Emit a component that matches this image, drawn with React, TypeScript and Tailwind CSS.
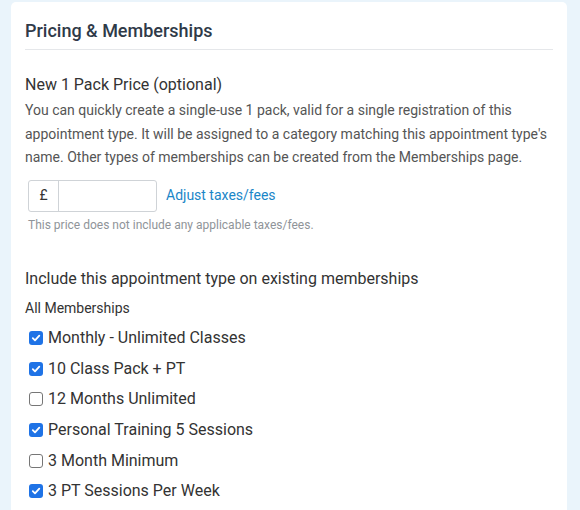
import React from 'react'

const MEMBERSHIPS: { name: string; checked: boolean }[] = [
  { name: 'Monthly - Unlimited Classes', checked: true },
  { name: '10 Class Pack + PT', checked: true },
  { name: '12 Months Unlimited', checked: false },
  { name: 'Personal Training 5 Sessions', checked: true },
  { name: '3 Month Minimum', checked: false },
  { name: '3 PT Sessions Per Week', checked: true },
]

function Check({ checked }: { checked: boolean }) {
  if (!checked) {
    return <span className="w-[14px] h-[14px] rounded-[3px] border border-[#767676] bg-white shrink-0" />
  }
  return (
    <span className="w-[14px] h-[14px] rounded-[3px] bg-[#1f73e6] shrink-0 flex items-center justify-center">
      <svg width="10" height="10" viewBox="0 0 10 10" fill="none">
        <path d="M1.8 5.2 L4 7.4 L8.3 2.6" stroke="white" strokeWidth="1.8" strokeLinecap="round" strokeLinejoin="round" />
      </svg>
    </span>
  )
}

export default function App() {
  return (
    <div className="w-[580px] h-[510px] overflow-hidden bg-[#eaf4fb] pt-[2px] pl-[11px] pr-[13px]" style={{ fontFamily: 'Roboto, "Liberation Sans", sans-serif' }}>
      <div className="bg-white rounded-t-[5px] h-[520px] px-[14px]">
        <div className="pt-[16px] pb-[5px] border-b border-[#e5e7ea]">
          <h2 className="text-[18px] leading-[26px] font-medium text-[#2f3a48]">Pricing &amp; Memberships</h2>
        </div>

        <div className="pt-[24px]">
          <h3 className="text-[16px] leading-[22px] text-[#333]">New 1 Pack Price (optional)</h3>
          <p className="mt-[3px] text-[14px] leading-[23.5px] text-[#555]">
            You can quickly create a single-use 1 pack, valid for a single registration of this appointment type. It will be assigned to a category matching this appointment type's name. Other types of memberships can be created from the Memberships page.
          </p>

          <div className="mt-[10px] flex items-center">
            <div className="flex w-[129px] h-[32px] ml-[3px] border border-[#cfd3d7] rounded-[3px]">
              <span className="w-[30px] flex items-center justify-center text-[14px] text-[#333] border-r border-[#cfd3d7]">£</span>
              <input className="flex-1 min-w-0 outline-none px-2 text-[14px]" />
            </div>
            <a className="ml-[9px] text-[14px] text-[#1a86c8] cursor-pointer">Adjust taxes/fees</a>
          </div>
          <p className="mt-[5px] ml-[3px] text-[12px] leading-[16px] text-[#8f9499]">This price does not include any applicable taxes/fees.</p>
        </div>

        <div className="pt-[35px]">
          <h3 className="text-[16px] leading-[22px] text-[#333]">Include this appointment type on existing memberships</h3>
          <p className="mt-[9px] text-[14px] leading-[18px] text-[#333]">All Memberships</p>
          <div className="mt-[11px] ml-[4px] flex flex-col gap-[10px]">
            {MEMBERSHIPS.map(m => (
              <label key={m.name} className="flex items-center gap-[5px] h-[20.7px] text-[16px] text-[#333]">
                <Check checked={m.checked} />
                <span>{m.name}</span>
              </label>
            ))}
          </div>
        </div>
      </div>
    </div>
  )
}
